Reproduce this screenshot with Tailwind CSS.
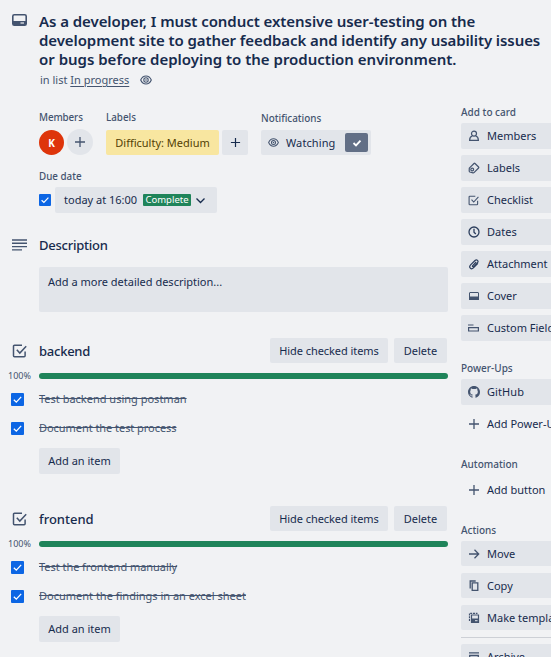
<!DOCTYPE html>
<html lang="en">
<head>
<meta charset="utf-8">
<title>Card</title>
<script src="https://cdn.jsdelivr.net/npm/@tailwindcss/browser@4"></script>
</head>
<body class="bg-[#f1f2f4] text-[#172b4d] font-['Noto_Sans',sans-serif] text-[11px] leading-[16px] w-[551px] h-[657px] overflow-hidden">
<svg class="hidden">
  <symbol id="check" viewBox="0 0 12 12"><path d="M2.600 6.200 4.900 8.400 9.400 3.600" fill="none" stroke="#fff" stroke-width="1.200"/></symbol>
  <symbol id="eye" viewBox="0 0 12 12"><g fill="none" stroke="currentColor" stroke-width="1.100"><path d="M.7 6C1.800 3.400 3.700 2 6 2s4.200 1.400 5.300 4C10.200 8.600 8.300 10 6 10S1.800 8.600.7 6Z"/><circle cx="6" cy="6" r="2.200"/></g><circle cx="6" cy="6" r=".8" fill="currentColor"/></symbol>
  <symbol id="plus" viewBox="0 0 12 12"><path d="M6 1v10M1 6h10" stroke="currentColor" stroke-width="1.300"/></symbol>
  <symbol id="checkbox" viewBox="0 0 15 14"><path d="M10 1.200H2.500A1 1 0 0 0 1.500 2.200v9.600a1 1 0 0 0 1 1h9.600a1 1 0 0 0 1-1V7.500M4.800 5.800l3 3.300 6.400-6.900" fill="none" stroke="currentColor" stroke-width="1.500"/></symbol>
</svg>
<div class="flex h-full">
  <main class="w-[448px] shrink-0">
    <header class="flex h-[89px] pt-[12px]">
      <svg class="ml-[12px] mt-[2px] mr-[12px] w-[15px] h-[12px] shrink-0 text-[#44546f]" viewBox="0 0 15 12"><rect x=".8" y=".8" width="13.400" height="10.400" rx="1.500" fill="none" stroke="currentColor" stroke-width="1.600"/><path d="M1 7h13v4H1z" fill="currentColor"/><path d="M8.500 9h3.500" stroke="#f1f2f4" stroke-width="1.200"/></svg>
      <div class="whitespace-nowrap">
        <h1 class="text-[15px] leading-[19px] font-semibold"><span class="block tracking-[-0.06px]">As a developer, I must conduct extensive user-testing on the</span><span class="block tracking-[-0.085px]">development site to gather feedback and identify any usability issues</span><span class="block tracking-[-0.01px]">or bugs before deploying to the production environment.</span></h1>
        <div class="flex items-center mt-[3px] ml-[1px] text-[#44546f]"><span>in list <span class="underline underline-offset-2">In progress</span></span><svg class="ml-[11px] w-[12px] h-[12px]"><use href="#eye"/></svg></div>
      </div>
    </header>
    <section class="pl-[39px] pt-[21px] h-[80px] flex">
      <div class="w-[67px]">
        <h3 class="text-[9.800px] font-medium text-[#44546f] h-[20px] tracking-[-0.1px]">Members</h3>
        <div class="flex gap-[3px]"><span class="size-[25px] rounded-full bg-[#de350b] text-white font-bold text-[10px] flex items-center justify-center">K</span><span class="size-[26px] -mt-px rounded-full bg-[#e2e5ea] text-[#44546f] flex items-center justify-center"><svg class="size-[12px]"><use href="#plus"/></svg></span></div>
      </div>
      <div class="w-[155px]">
        <h3 class="text-[9.800px] font-medium text-[#44546f] h-[20px]">Labels</h3>
        <div class="flex gap-[3px]"><span class="w-[113px] h-[25px] rounded-[2px] bg-[#f8e6a0] text-[#533f04] flex items-center justify-center whitespace-nowrap">Difficulty: Medium</span><span class="w-[26px] h-[25px] rounded-[2px] bg-[#e2e5ea] flex items-center justify-center"><svg class="size-[11px]"><use href="#plus"/></svg></span></div>
      </div>
      <div>
        <h3 class="text-[9.900px] font-medium text-[#44546f] h-[20px]">Notifications</h3>
        <div class="w-[110px] h-[25px] rounded-[2px] bg-[#e2e5ea] flex items-center pl-[7px] pr-[3px]"><svg class="size-[11px] mr-[7px] text-[#44546f]"><use href="#eye"/></svg><span class="tracking-[0.1px]">Watching</span><span class="ml-auto w-[23px] h-[19px] rounded-[2px] bg-[#626f86] flex items-center justify-center"><svg class="size-[12px]" viewBox="0 0 12 12"><path d="M2.500 6 5 8.400 9.500 3.600" fill="none" stroke="#fff" stroke-width="1.800"/></svg></span></div>
      </div>
    </section>
    <section class="pl-[39px] h-[64px]">
      <h3 class="text-[9.800px] font-medium text-[#44546f] h-[18px]">Due date</h3>
      <div class="flex items-center"><svg class="size-[12px] bg-[#0c66e4] mr-[4px] rounded-[1px]"><use href="#check"/></svg>
        <div class="w-[162px] h-[26px] rounded-[2px] bg-[#e2e5ea] flex items-center pl-[9px]"><span class="w-[79px] whitespace-nowrap">today at 16:00</span><span class="w-[48px] h-[12px] rounded-[1px] bg-[#1f845a] text-white text-[9.500px] leading-[12px] text-center">Complete</span><svg class="ml-[4px] size-[11px]" viewBox="0 0 11 11"><path d="M1.500 3.500 5.500 7.500 9.500 3.500" fill="none" stroke="currentColor" stroke-width="1.300"/></svg></div></div>
    </section>
    <section class="h-[105px]">
      <div class="flex items-center h-[24px]"><svg class="ml-[12px] w-[15px] h-[12px] mr-[12px]" viewBox="0 0 15 12"><path d="M0 1h15M0 4.300h15M0 7.600h15M0 10.900h10" stroke="#44546f" stroke-width="1.400"/></svg><h2 class="text-[13px] font-medium tracking-[-0.25px]">Description</h2></div>
      <div class="ml-[39px] mt-[10px] h-[45px] rounded-[2px] bg-[#e2e5ea] pl-[9px] pt-[7px]"><span>Add a more detailed description...</span></div>
    </section>
    <section class="h-[168px]">
      <div class="flex items-center h-[25px]"><svg class="ml-[12px] w-[15px] h-[14px] mr-[12px] text-[#44546f]"><use href="#checkbox"/></svg><h2 class="text-[13px] font-medium tracking-[-0.25px]">backend</h2><span class="ml-auto w-[118px] h-[25px] rounded-[2px] bg-[#e2e5ea] flex items-center justify-center whitespace-nowrap tracking-[-0.06px]">Hide checked items</span><span class="ml-[6px] mr-px w-[53px] h-[25px] rounded-[2px] bg-[#e2e5ea] flex items-center justify-center">Delete</span></div>
      <div class="flex items-center mt-[10px] h-[6px] text-[#44546f] text-[9px]"><span class="w-[31px] ml-[8px]">100%</span><span class="flex-1 h-[6px] rounded-full bg-[#1f845a]"></span></div>
      <div class="flex items-center mt-[6px] h-[28px] text-[#44546f]"><svg class="size-[13px] ml-[11px] mr-[15px] rounded-[1px] bg-[#0c66e4]"><use href="#check"/></svg><span class="line-through">Test backend using postman</span></div>
      <div class="flex items-center mt-px h-[28px] text-[#44546f]"><svg class="size-[13px] ml-[11px] mr-[15px] rounded-[1px] bg-[#0c66e4]"><use href="#check"/></svg><span class="line-through tracking-[-0.05px]">Document the test process</span></div>
      <div class="ml-[39px] mt-[6px] w-[81px] h-[26px] rounded-[2px] bg-[#e2e5ea] flex items-center justify-center">Add an item</div>
    </section>
    <section class="h-[151px]">
      <div class="flex items-center h-[25px]"><svg class="ml-[12px] w-[15px] h-[14px] mr-[12px] text-[#44546f]"><use href="#checkbox"/></svg><h2 class="text-[13px] font-medium">frontend</h2><span class="ml-auto w-[118px] h-[25px] rounded-[2px] bg-[#e2e5ea] flex items-center justify-center whitespace-nowrap tracking-[-0.06px]">Hide checked items</span><span class="ml-[6px] mr-px w-[53px] h-[25px] rounded-[2px] bg-[#e2e5ea] flex items-center justify-center">Delete</span></div>
      <div class="flex items-center mt-[10px] h-[6px] text-[#44546f] text-[9px]"><span class="w-[31px] ml-[8px]">100%</span><span class="flex-1 h-[6px] rounded-full bg-[#1f845a]"></span></div>
      <div class="flex items-center mt-[6px] h-[28px] text-[#44546f]"><svg class="size-[13px] ml-[11px] mr-[15px] rounded-[1px] bg-[#0c66e4]"><use href="#check"/></svg><span class="line-through tracking-[-0.04px]">Test the frontend manually</span></div>
      <div class="flex items-center mt-px h-[28px] text-[#44546f]"><svg class="size-[13px] ml-[11px] mr-[15px] rounded-[1px] bg-[#0c66e4]"><use href="#check"/></svg><span class="line-through">Document the findings in an excel sheet</span></div>
      <div class="ml-[39px] mt-[6px] w-[81px] h-[26px] rounded-[2px] bg-[#e2e5ea] flex items-center justify-center">Add an item</div>
    </section>
  </main>
  <aside class="ml-[13px] mt-[104px] w-[130px] shrink-0 whitespace-nowrap">
    <h3 class="text-[10px] font-medium text-[#44546f] h-[19px]">Add to card</h3>
    <div class="flex flex-col gap-[6px]">
      <div class="h-[26px] bg-[#e2e5ea] rounded-[2px] flex items-center pl-[7px]"><svg class="w-[12px] h-[12px] mr-[7px] text-[#44546f]" viewBox="0 0 12 12"><g fill="none" stroke="currentColor" stroke-width="1.200"><circle cx="6" cy="3.600" r="2.500"/><path d="M4.500 5.800C2.500 6.500 1.600 8 1.600 10.400h8.800c0-2.400-.9-3.900-2.900-4.600"/></g></svg><span>Members</span></div>
      <div class="h-[26px] bg-[#e2e5ea] rounded-[2px] flex items-center pl-[7px]"><svg class="w-[12px] h-[12px] mr-[7px] text-[#44546f]" viewBox="0 0 12 12"><g fill="none" stroke="currentColor" stroke-width="1.200"><path d="M1.300 6.200 6 1.500Q6.500 1 7 1.500L10.600 5Q11.100 5.500 10.600 6L6 10.600Q5.500 11 5 10.800L1.800 10Q1.300 9.800 1.200 9Z"/><circle cx="4.200" cy="7.500" r="1.400"/></g></svg><span>Labels</span></div>
      <div class="h-[26px] bg-[#e2e5ea] rounded-[2px] flex items-center pl-[7px]"><svg class="w-[11px] h-[11px] mr-[8px] text-[#44546f]"><use href="#checkbox"/></svg><span>Checklist</span></div>
      <div class="h-[26px] bg-[#e2e5ea] rounded-[2px] flex items-center pl-[7px]"><svg class="w-[12px] h-[12px] mr-[7px] text-[#2c3e5d]" viewBox="0 0 12 12"><g fill="none" stroke="currentColor" stroke-width="1.300"><circle cx="6" cy="6" r="5"/><path d="M6 2.700V6.200L7.800 8"/></g></svg><span>Dates</span></div>
      <div class="h-[26px] bg-[#e2e5ea] rounded-[2px] flex items-center pl-[7px]"><svg class="w-[12px] h-[12px] mr-[7px] text-[#2c3e5d]" viewBox="0 0 12 12"><path d="M8.200 4 4.700 7.600C4 8.400 5 9.300 5.700 8.600L9.400 4.900C11 3.100 8.900.8 7 2.500L2.600 6.900C.3 9.400 3.200 12 5.400 9.900L9.900 5.400" fill="none" stroke="currentColor" stroke-width="1.200"/></svg><span>Attachment</span></div>
      <div class="h-[26px] bg-[#e2e5ea] rounded-[2px] flex items-center pl-[8px]"><svg class="w-[10px] h-[8px] mr-[8px] text-[#44546f]" viewBox="0 0 10 8"><rect x=".5" y=".5" width="9" height="7" rx=".5" fill="none" stroke="currentColor"/><path d="M0 4.500h10V8H0z" fill="currentColor"/></svg><span>Cover</span></div>
      <div class="h-[26px] bg-[#e2e5ea] rounded-[2px] flex items-center pl-[7px]"><svg class="w-[11px] h-[8px] mr-[8px] text-[#44546f]" viewBox="0 0 11 8"><path d="M0 1h5.500M.6 3.600h9.800v3.400H.6z" fill="none" stroke="currentColor" stroke-width="1.200"/></svg><span>Custom Fields</span></div>
    </div>
    <h3 class="text-[10px] font-medium text-[#44546f] h-[19px] mt-[19px]">Power-Ups</h3>
    <div class="h-[26px] bg-[#e2e5ea] rounded-[2px] flex items-center pl-[7px]"><svg class="w-[12px] h-[12px] mr-[7px] text-[#44546f]" viewBox="0 0 16 16"><path fill="currentColor" d="M8 0C3.580 0 0 3.580 0 8c0 3.540 2.290 6.530 5.470 7.590.4.070.55-.17.55-.38v-1.490c-2.010.37-2.530-.49-2.690-.94-.09-.23-.48-.94-.82-1.130-.28-.15-.68-.52-.01-.53.63-.01 1.080.58 1.230.82.72 1.210 1.870.87 2.330.66.07-.52.28-.87.51-1.070-1.780-.2-3.640-.89-3.640-3.950 0-.87.31-1.590.82-2.150-.08-.2-.36-1.020.08-2.120 0 0 .67-.21 2.200.82A7.500 7.500 0 0 1 8 3.860c.68 0 1.360.09 2 .27 1.530-1.040 2.200-.82 2.200-.82.44 1.100.16 1.920.08 2.120.51.56.82 1.270.82 2.150 0 3.070-1.870 3.750-3.650 3.950.29.25.54.73.54 1.480v2.200c0 .21.15.46.55.38A8 8 0 0 0 16 8c0-4.420-3.580-8-8-8Z"/></svg><span class="tracking-[0.1px]">GitHub</span></div>
    <div class="h-[26px] mt-[6px] flex items-center pl-[7px]"><svg class="size-[12px] mr-[7px] text-[#44546f]"><use href="#plus"/></svg><span>Add Power-Ups</span></div>
    <h3 class="text-[10px] font-medium text-[#44546f] h-[21px] mt-[19px]">Automation</h3>
    <div class="h-[26px] flex items-center pl-[7px]"><svg class="size-[12px] mr-[7px] text-[#44546f]"><use href="#plus"/></svg><span>Add button</span></div>
    <h3 class="text-[10px] font-medium text-[#44546f] h-[19px] mt-[19px]">Actions</h3>
    <div class="flex flex-col gap-[7px]">
      <div class="h-[25px] bg-[#e2e5ea] rounded-[2px] flex items-center pl-[7px]"><svg class="size-[12px] mr-[7px] text-[#44546f]" viewBox="0 0 12 12"><path d="M1 6h9.500M6.500 1.800 10.700 6 6.500 10.200" fill="none" stroke="currentColor" stroke-width="1.300"/></svg><span>Move</span></div>
      <div class="h-[25px] bg-[#e2e5ea] rounded-[2px] flex items-center pl-[7px]"><svg class="size-[12px] mr-[7px] text-[#44546f]" viewBox="0 0 12 12"><path d="M4.200 2.800h5.600v7.600H4.200zM2.200 8.500V1h5.500" fill="none" stroke="currentColor" stroke-width="1.300"/></svg><span>Copy</span></div>
      <div class="h-[25px] bg-[#e2e5ea] rounded-[2px] flex items-center pl-[7px]"><svg class="size-[12px] mr-[7px] text-[#44546f]" viewBox="0 0 12 12"><g fill="none" stroke="currentColor" stroke-width="1.200"><path d="M3.500 3h7v7.500h-7z"/><path d="M1.500 9V1.300h8" stroke-dasharray="2 .8"/></g><path d="M3 6.500h8V11H3z" fill="currentColor"/><path d="M7 8.700h2.500" stroke="#e2e5ea"/></svg><span>Make template</span></div>
    </div>
    <hr class="mt-[7px] border-[#cdd0d6]">
    <div class="h-[26px] mt-[6px] bg-[#e2e5ea] rounded-[2px] flex items-center pl-[7px]"><svg class="size-[12px] mr-[7px] text-[#44546f]" viewBox="0 0 12 12"><path d="M1 1.800h10M1.700 4.500h8.600v6H1.700zM4 6.800h4" fill="none" stroke="currentColor" stroke-width="1.300"/></svg><span>Archive</span></div>
  </aside>
</div>
</body>
</html>
